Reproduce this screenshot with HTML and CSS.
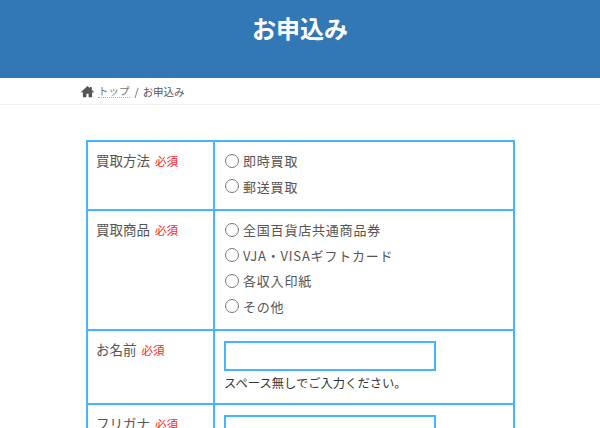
FILE: index.html
```html
<!DOCTYPE html>
<html lang="ja">
<head>
    <meta charset="UTF-8">
    <meta name="viewport" content="width=device-width, initial-scale=1.0">
    <title>お申込み</title>
    <link rel="stylesheet" href="styles.css">
</head>
<body>
    <header class="page-header">
        <h1>お申込み</h1>
    </header>

    <nav class="breadcrumb">
        <svg class="home-icon" viewBox="0 0 24 24" width="13" height="13"><path d="M12 2 0 12.8l1.6 1.7L3.5 13v9.5H10V16h4v6.500h6.500V13l1.900 1.500L24 12.800 20 9.200V3.500h-3.500v2.500z"/></svg>
        <a href="#">トップ</a>
        <span class="sep">/</span>
        <span>お申込み</span>
    </nav>

    <main class="content">
        <table class="form-table">
            <tr class="row-method">
                <th>買取方法<span class="required">必須</span></th>
                <td>
                    <label class="radio"><input type="radio" name="method">即時買取</label>
                    <label class="radio"><input type="radio" name="method">郵送買取</label>
                </td>
            </tr>
            <tr class="row-item">
                <th>買取商品<span class="required">必須</span></th>
                <td>
                    <label class="radio"><input type="radio" name="item">全国百貨店共通商品券</label>
                    <label class="radio"><input type="radio" name="item">VJA・VISAギフトカード</label>
                    <label class="radio"><input type="radio" name="item">各収入印紙</label>
                    <label class="radio"><input type="radio" name="item">その他</label>
                </td>
            </tr>
            <tr class="row-name">
                <th>お名前<span class="required">必須</span></th>
                <td>
                    <input class="text-input" type="text">
                    <p class="note">スペース無しでご入力ください。</p>
                </td>
            </tr>
            <tr class="row-name">
                <th>フリガナ<span class="required">必須</span></th>
                <td>
                    <input class="text-input" type="text">
                </td>
            </tr>
        </table>
    </main>
</body>
</html>
```

FILE: styles.css
```css
html, body {
    height: 428px;
    overflow: hidden;
}

body {
    margin: 0;
    font-family: "Noto Sans CJK JP", "Noto Sans", sans-serif;
    font-size: 13px;
    color: #555;
    background: #fff;
}

.page-header {
    height: 78px;
    background: #3278b5;
    color: #fff;
    text-align: center;
}

.page-header h1 {
    margin: 0;
    padding-top: 11px;
    font-size: 24px;
    line-height: 34px;
    font-weight: 700;
}

.breadcrumb {
    display: flex;
    align-items: center;
    height: 26px;
    padding-left: 81px;
    border-bottom: 1px solid #eee;
    font-size: 10.5px;
    color: #555;
}

.home-icon {
    fill: #555;
    margin-right: 4px;
}

.breadcrumb a {
    color: #777;
    text-decoration: none;
    border-bottom: 1px dotted #aaa;
    line-height: 13px;
}

.sep {
    margin: 0 4px 0 5px;
}

.content {
    padding: 36px 0 0 86px;
}

.form-table {
    width: 429px;
    margin-top: -1px;
    border-collapse: collapse;
    table-layout: fixed;
}

.form-table th,
.form-table td {
    border: 2px solid #45b5ff;
    vertical-align: top;
    text-align: left;
}

.form-table th {
    width: 117px;
    padding: 8px 0 0 8px;
    font-weight: 400;
    line-height: 20px;
    font-size: 13.5px;
}

.form-table td {
    padding: 6px 9px 0 9px;
}

.row-method {
    height: 69px;
}

.row-item {
    height: 120px;
}

.row-name {
    height: 74px;
}

.required {
    margin-left: 5px;
    color: #f22;
    font-size: 11.5px;
}

.radio {
    display: flex;
    align-items: center;
    height: 25.5px;
    padding-left: 1px;
    font-size: 13px;
    letter-spacing: 0.8px;
}

.radio input {
    appearance: none;
    width: 14px;
    height: 14px;
    margin: 0 4px 0 0;
    border: 1px solid #777;
    border-radius: 50%;
    background: #fff;
}

.text-input {
    display: block;
    box-sizing: border-box;
    width: 212px;
    height: 30px;
    margin: 4px 0 0 0;
    border: 2px solid #45b5ff;
    background: #fff;
    outline: none;
}

.note {
    margin: 4px 0 0;
    font-size: 12.3px;
    line-height: 17px;
    color: #333;
}
```
